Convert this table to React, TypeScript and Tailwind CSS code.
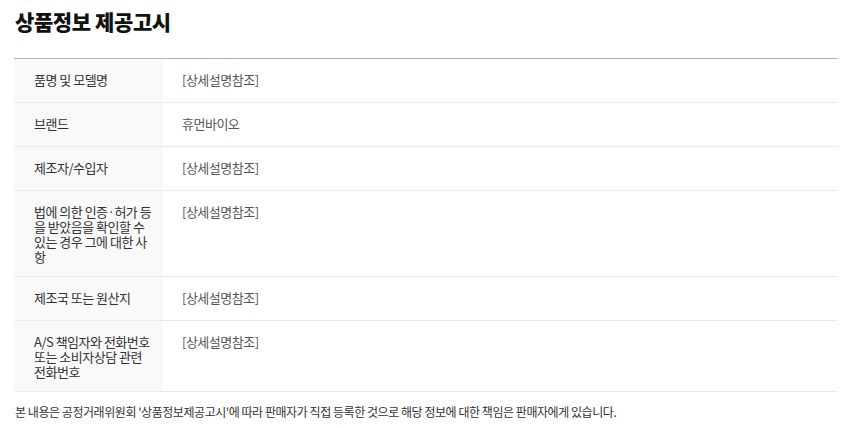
import React from "react";

const rows: { label: string; value: string }[] = [
  { label: "품명 및 모델명", value: "[상세설명참조]" },
  { label: "브랜드", value: "휴먼바이오" },
  { label: "제조자/수입자", value: "[상세설명참조]" },
  { label: "법에 의한 인증·허가 등을 받았음을 확인할 수 있는 경우 그에 대한 사항", value: "[상세설명참조]" },
  { label: "제조국 또는 원산지", value: "[상세설명참조]" },
  { label: "A/S 책임자와 전화번호 또는 소비자상담 관련 전화번호", value: "[상세설명참조]" },
];

export default function App() {
  return (
    <div
      className="w-[852px] h-[428px] bg-white px-[14px] overflow-hidden"
      style={{ fontFamily: '"Noto Sans CJK KR", "Noto Sans", sans-serif' }}
    >
      <h1 className="pt-[7px] text-[21px] leading-[28px] font-extrabold text-[#111] tracking-[-0.4px] pl-[1px]">
        상품정보 제공고시
      </h1>
      <div className="mt-[23px] w-[824px] border-t border-[#b4b4b4]">
        {rows.map((r, i) => (
          <div key={i} className="flex min-h-[44px] border-b border-[#ebebeb]">
            <div className="w-[149px] shrink-0 bg-[#f9f9f9] pl-[20px] pr-[11px] pt-[13px] pb-[12px] text-[13px] leading-[15px] text-[#333] tracking-[-0.5px] break-all">
              {r.label}
            </div>
            <div className="flex-1 pl-[19px] pt-[13px] pb-[12px] text-[13px] leading-[15px] text-[#555] tracking-[-0.5px]">
              {r.value}
            </div>
          </div>
        ))}
      </div>
      <p className="pt-[12px] pl-[1px] text-[12px] leading-[15px] text-[#333] tracking-[-0.45px]">
        본 내용은 공정거래위원회 '상품정보제공고시'에 따라 판매자가 직접 등록한 것으로 해당 정보에 대한 책임은 판매자에게 있습니다.
      </p>
    </div>
  );
}
